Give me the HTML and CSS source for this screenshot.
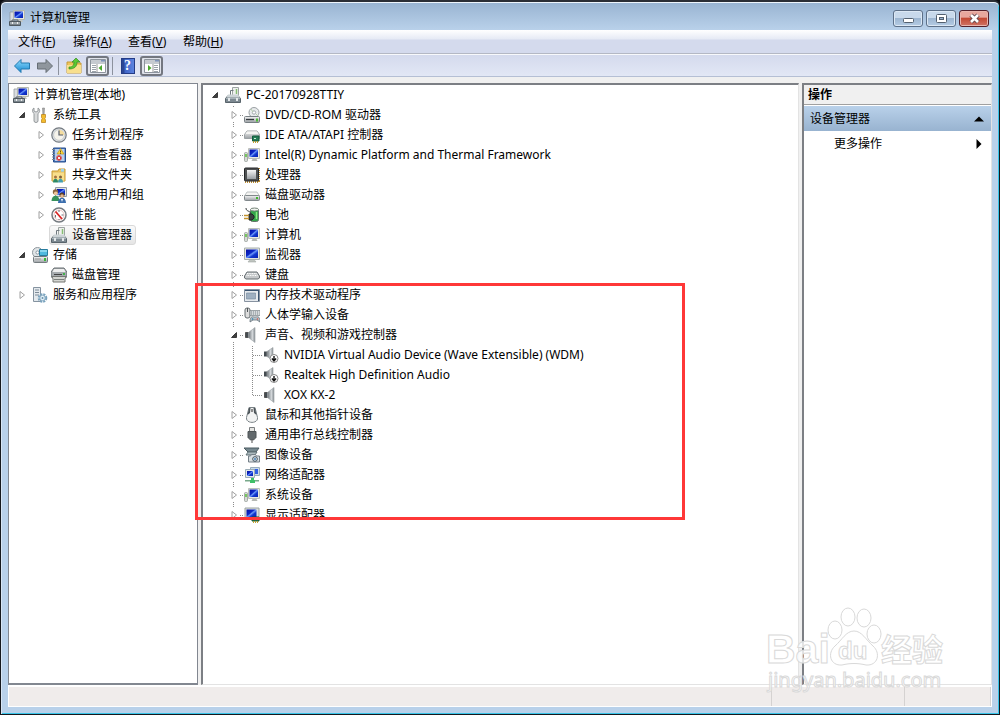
FILE: index.html
```html
<!DOCTYPE html>
<html lang="zh-CN">
<head>
<meta charset="utf-8">
<title>计算机管理</title>
<link rel="stylesheet" href="styles.css">
</head>
<body>
<svg class="defs" aria-hidden="true">
  <defs>
    <linearGradient id="screen" x1="0" y1="0" x2="1" y2="1"><stop offset="0" stop-color="#0510a0"/><stop offset=".4" stop-color="#0c28c8"/><stop offset=".5" stop-color="#6c98f8"/><stop offset=".65" stop-color="#1238d0"/><stop offset="1" stop-color="#0820b0"/></linearGradient>
    <linearGradient id="metal" x1="0" y1="0" x2="0" y2="1"><stop offset="0" stop-color="#f6f6f6"/><stop offset="1" stop-color="#9a9fa3"/></linearGradient>
    <linearGradient id="cone" x1="0" y1="0" x2="1" y2="0"><stop offset="0" stop-color="#6c7277"/><stop offset=".6" stop-color="#d5d9dc"/><stop offset="1" stop-color="#848b90"/></linearGradient>
    <linearGradient id="blue" x1="0" y1="0" x2="0" y2="1"><stop offset="0" stop-color="#8fdcff"/><stop offset="1" stop-color="#1687cf"/></linearGradient>
  </defs>
  <symbol id="mgmt" viewBox="0 0 16 16"><path d="M1 2h4v9H1z" fill="#d9dcdf" stroke="#8b9298" stroke-width=".7"/><path d="M4.500 .5h11v9h-11z" fill="#e6e8e2" stroke="#b5b9af"/><path d="M5.500 1.500h8.500V8H5.500z" fill="url(#screen)"/><path d="M8 10h5l1 2H8z" fill="#c5c8c4"/><path d="M3 10h6v2H3z" fill="none" stroke="#59636a"/><path d="M.5 11.500h11v4H.5z" fill="#78838a" stroke="#4e585f"/><path d="M1 13h10" stroke="#c6ced2"/><path d="M3 12h1v2H3zM8 12h1v2H8z" fill="#eee"/></symbol>
  <symbol id="tools" viewBox="0 0 16 16"><path d="M2 1v3l2 1 2-1V1c2 1 2.500 4 0 5.500V14c0 2-4 2-4 0V6.500C0 5 0 2 2 1z" fill="#d8dadb" stroke="#83888c" stroke-width=".8"/><path d="M10.500 1h2l-.4 7h-1.200z" fill="#aaa" stroke="#777" stroke-width=".5"/><path d="M9.500 7.500h4v3l-.7 1 .7 1.500v2.500h-4V13l.7-1.500-.7-1z" fill="#f3bc2e" stroke="#b77c12" stroke-width=".7"/></symbol>
  <symbol id="clock" viewBox="0 0 16 16"><circle cx="8" cy="8" r="7.200" fill="#dfe4e8" stroke="#73797f" stroke-width="1.200"/><circle cx="8" cy="8" r="5.400" fill="#f5f3eb" stroke="#b1b5b8" stroke-width=".6"/><path d="M8 2.700A5.300 5.300 0 0 1 13.300 8H8z" fill="#f4dda0"/><path d="M8 3.500V8h4" fill="none" stroke="#555d6b" stroke-width="1.200"/></symbol>
  <symbol id="event" viewBox="0 0 16 16"><path d="M2.500 1h12v14h-12z" fill="#4575ba" stroke="#284f8e"/><path d="M4 2h9.500v12H4z" fill="#b8d0ef"/><path d="M1 2.500h3M1 5h3M1 7.500h3M1 10h3M1 12.500h3" stroke="#7f8a98"/><path d="M9.500 1.500l3.500 5.500H6z" fill="#ffd93c" stroke="#ba8e11" stroke-width=".6"/><path d="M9.500 3.500v2M9.500 6v.8" stroke="#3d3416" stroke-width=".8"/><circle cx="8" cy="11" r="2.700" fill="#d83a3a"/><path d="M6.800 9.800l2.400 2.400M9.200 9.800l-2.400 2.400" stroke="#fff" stroke-width=".9"/></symbol>
  <symbol id="share" viewBox="0 0 16 16"><path d="M1 4h6l1-2h6v12H1z" fill="#f2cb62" stroke="#c79c35"/><path d="M10 2h3v4h-3z" fill="#9fd5ee"/><path d="M1.500 5h12v9h-12z" fill="#f8df8c" stroke="#d3aa49" stroke-width=".6"/><circle cx="4.500" cy="10" r="1.500" fill="#a67241"/><circle cx="9.500" cy="10" r="1.500" fill="#80603d"/><path d="M2 15.500c0-5 5-5 5 0z" fill="#2c8966"/><path d="M7 15.500c0-5 5-5 5 0z" fill="#429fb1"/></symbol>
  <symbol id="users" viewBox="0 0 16 16"><path d="M4.500.5h11v9h-11z" fill="#dfe4e7" stroke="#949da4"/><path d="M6 2h8v6H6z" fill="url(#screen)"/><circle cx="4.500" cy="5" r="2.700" fill="#8b6540"/><circle cx="4.800" cy="6.300" r="1.900" fill="#edc49c"/><path d="M.5 14c0-7 8-7 8 0z" fill="#37915b"/><circle cx="11" cy="8" r="2.500" fill="#604326"/><circle cx="11" cy="9" r="1.800" fill="#e5b98f"/><path d="M7 16c0-7 8-7 8 0z" fill="#3c6fae"/><path d="M10 12l1 3 1-3z" fill="#fff"/></symbol>
  <symbol id="perf" viewBox="0 0 16 16"><circle cx="8" cy="8" r="7" fill="#fff" stroke="#757b80" stroke-width="1.500"/><circle cx="8" cy="8" r="5" fill="#fff" stroke="#d8a09c" stroke-width=".6"/><path d="M4.500 4.500l6.500 7.500" stroke="#d82525" stroke-width="1.800"/><path d="M8 3v2M12.500 8h-2M8 12v1M4.500 10.500V8" stroke="#59636b" stroke-width=".9"/></symbol>
  <symbol id="devmgr" viewBox="0 0 16 16"><path d="M7.500.5h6v8h-6z" fill="#eef0ee" stroke="#9da4a2"/><path d="M5.500 8V3.500h3" fill="none" stroke="#70797e"/><path d="M11.500 2v5" stroke="#86bd73" stroke-width="1.500"/><path d="M3 8.500h10l2.500 3v4H.5v-4z" fill="#7d8991" stroke="#59646b"/><path d="M3 7.500h10l2 3H1.500z" fill="#ccd3d6"/><path d="M1 11.500h14" stroke="#a8b3b9"/><path d="M3 11h2v3H3zM11 11h2v3h-2z" fill="#e4e8ea"/></symbol>
  <symbol id="storage" viewBox="0 0 16 16"><circle cx="5.500" cy="5.500" r="5" fill="#e1e5e7" stroke="#8d969c"/><circle cx="5.500" cy="5.500" r="1.600" fill="#fff" stroke="#8998a2"/><path d="M7.500 2.500h8v6h-8z" fill="#50b9df" stroke="#287c9e"/><path d="M8 4h7" stroke="#c4f2ff"/><rect x="1.500" y="9.500" width="14" height="6" rx="1" fill="url(#metal)" stroke="#747c80"/><path d="M3 12h6" stroke="#999"/><path d="M12 11h2v3h-2z" fill="#38b83b"/></symbol>
  <symbol id="diskmgmt" viewBox="0 0 16 16"><path d="M3 1h10l3 4v5H0V5z" fill="#a5aaad" stroke="#686f73"/><path d="M3 2h10l1.500 3H1.500z" fill="#eee"/><path d="M3 7.500h8" stroke="#444"/><path d="M12 6h2v2h-2z" fill="#42b349"/><path d="M1 9.500h14l-1 2.500v3H2v-3z" fill="#d5d6d2" stroke="#747773"/><path d="M3 12.500h10" fill="none" stroke="#7b807c"/></symbol>
  <symbol id="services" viewBox="0 0 16 16"><path d="M1.500.5h7v14h-7z" fill="#e4e9ed" stroke="#8593a0"/><path d="M3 3h4M3 5.500h4M3 8h4" stroke="#7d8b98"/><circle cx="10.500" cy="11" r="3.500" fill="none" stroke="#79a2bd" stroke-width="2.600" stroke-dasharray="1.900 .9"/><circle cx="10.500" cy="11" r="2.700" fill="#e7f2f7" stroke="#8bb0c8"/><circle cx="10.500" cy="11" r="1" fill="#6892ad"/></symbol>
  <symbol id="dvd" viewBox="0 0 16 16"><circle cx="10" cy="5.500" r="5" fill="#e8ebec" stroke="#999fa2"/><circle cx="10" cy="5.500" r="1.700" fill="#fff" stroke="#a2a9ad"/><path d="M7 2l2 3M12 7l2 2" stroke="#b4cdaa"/><rect x=".5" y="9.500" width="15" height="6" rx="1" fill="url(#metal)" stroke="#777f83"/><path d="M2 12.500h8" stroke="#343a3d" stroke-width="1.300"/><path d="M12 11.500h2v3h-2z" fill="#4eba36"/></symbol>
  <symbol id="ide" viewBox="0 0 16 16"><path d="M3 4h10l2.500 3.500v4h-15v-4z" fill="url(#metal)" stroke="#9ca2a5"/><path d="M3 4.500h10l1.500 2.500h-13z" fill="#f5f5f3"/><path d="M8.500 9h6.500v5H8.500z" fill="#247b56" stroke="#105d3c"/><path d="M10 11h2v1h-2z" fill="#c7efd4"/><path d="M9.500 14v2M11.500 14v2M13.500 14v2" stroke="#bd9e34"/></symbol>
  <symbol id="pc" viewBox="0 0 16 16"><rect x=".5" y="5.500" width="3" height="9" rx="1" fill="#d6dad7" stroke="#969c98" stroke-width=".8"/><path d="M2 7v3" stroke="#4fc02e" stroke-width="1.400"/><path d="M4.500 1.500h11v10h-11z" fill="#e9eae5" stroke="#bcc0bb"/><path d="M5.500 2.500H14V10H5.500z" fill="url(#screen)"/><path d="M8.500 12h4l1 2h-6z" fill="#b5b8b4"/></symbol>
  <symbol id="cpu" viewBox="0 0 16 16"><path d="M1 15h14v-2M15 1v14" fill="none" stroke="#bd8e31" stroke-width="2" stroke-dasharray="1 1"/><rect x=".5" y="1" width="14" height="13" rx="1" fill="#4e5152" stroke="#242729"/><path d="M3 3h9v9H3z" fill="url(#metal)"/></symbol>
  <symbol id="disk" viewBox="0 0 16 16"><path d="M3 5h10l2.500 4H.5z" fill="#f4f4f2" stroke="#acb2b4" stroke-width=".8"/><rect x=".5" y="8.500" width="15" height="5" rx="1" fill="url(#metal)" stroke="#81888b"/><path d="M12 10h2v2h-2z" fill="#3eb72b"/></symbol>
  <symbol id="battery" viewBox="0 0 16 16"><rect x="6.500" y="1.500" width="8" height="13" rx="2" fill="#34a54a" stroke="#66756b"/><ellipse cx="10.500" cy="2.500" rx="4" ry="1.500" fill="#eff3ee" stroke="#7c897f"/><path d="M12.500 5v7" stroke="#8cec83" stroke-width="1.500"/><path d="M2 1c0 4 4 2 5 6" fill="none" stroke="#383d3d"/><path d="M5 7h3l2 2v2l-2 2H5z" fill="#3b4241" stroke="#202524"/><path d="M0 8.500h5M0 11.500h5" stroke="#c4932e" stroke-width="1.500"/></symbol>
  <symbol id="monitor" viewBox="0 0 16 16"><path d="M.5 1h15v11.500H.5z" fill="#e2e4df" stroke="#a6aeac"/><path d="M2 2.500h12v8.500H2z" fill="url(#screen)"/><path d="M6 12.500h4l2 2.500H4z" fill="#bfc4bf" stroke="#a2a9a6" stroke-width=".6"/></symbol>
  <symbol id="keyboard" viewBox="0 0 16 16"><path d="M3 5h10l2.500 4v2l-1.500 1H2l-1.500-1V9z" fill="#c5c8ca" stroke="#676e72"/><path d="M3 6.500h10M2.500 8.500h11" stroke="#fff" stroke-dasharray="1 .7"/></symbol>
  <symbol id="memory" viewBox="0 0 16 16"><path d="M.5 2.500h15v12H.5z" fill="#e6eaee" stroke="#8792a0"/><path d="M2.500 6h9v6h-9z" fill="#9fb0c1" stroke="#74869a" stroke-width=".6"/><path d="M1 3.500h14M14.500 4v10" stroke="#3b5470"/></symbol>
  <symbol id="hid" viewBox="0 0 16 16"><rect x="1" y="1" width="5" height="10" rx="2" fill="#ddd" stroke="#656c70"/><path d="M3.500 1v4" stroke="#505659"/><path d="M6 3.500h10v5H6z" fill="#d6dadc" stroke="#7b8488" stroke-width=".7"/><path d="M7 5h8M7 7h8" stroke="#7c878c" stroke-dasharray="1 1"/><path d="M6 15c0-7 3-5 5-5s5-2 5 5l-3-2H9z" fill="#b8c3ca" stroke="#64717a" stroke-width=".8"/><circle cx="8.500" cy="12" r=".8" fill="#227ca9"/><circle cx="13.500" cy="12" r=".8" fill="#d35146"/></symbol>
  <symbol id="speaker" viewBox="0 0 16 16"><path d="M1.500 5.500h3v5h-3z" fill="#454c51" stroke="#555"/><path d="M4.500 5.500L11 .5v15l-6.500-5z" fill="url(#cone)" stroke="#a0a6aa" stroke-width=".7"/></symbol>
  <symbol id="speaker-off" viewBox="0 0 16 16"><path d="M1 4.500h3v5H1z" fill="#454c51"/><path d="M4 4.500L10 .5v13L4 9.500z" fill="url(#cone)" stroke="#a0a6aa" stroke-width=".7"/><circle cx="11" cy="11.500" r="4" fill="#fff" stroke="#888"/><path d="M11 9v4M8.900 11.500L11 14l2.100-2.500" fill="none" stroke="#111" stroke-width="1.400"/></symbol>
  <symbol id="mouse" viewBox="0 0 16 16"><path d="M5 .5h6l2.500 10c1 6.500-12 6.500-11 0z" fill="#f2f3f3" stroke="#7b8387"/><path d="M5 1h1.500L6 6 3.500 8zM9.500 1H11l1.500 7L10 6z" fill="#4c5459"/><path d="M8 2v3" stroke="#555" stroke-width="1.300"/></symbol>
  <symbol id="usb" viewBox="0 0 16 16"><path d="M5.500.5h5v5h-5z" fill="#e5e5e2" stroke="#797d7f"/><path d="M4 4.500h8v6L9.500 13h-3L4 10.500z" fill="#62696c" stroke="#4e5456"/><path d="M8 13v3" stroke="#888" stroke-width="1.500"/></symbol>
  <symbol id="camera" viewBox="0 0 16 16"><path d="M0 1h15l-3 4H4z" fill="#778990" stroke="#4b5b61"/><path d="M4 5h9l-2 3H2z" fill="#acbabe" stroke="#607176"/><path d="M4.500 9h2l1-1.500h4l1 1.500h3v6h-11z" fill="#d9dfe2" stroke="#747f87"/><circle cx="11" cy="12" r="2.300" fill="#eff8ff" stroke="#3a4b58"/><circle cx="11" cy="12" r="1" fill="#407aad"/></symbol>
  <symbol id="net" viewBox="0 0 16 16"><path d="M6.500.5h9v8h-9z" fill="#cbdbea" stroke="#99acb9"/><path d="M8 2h6v5H8z" fill="#315fe2"/><path d="M1.500 2.500h9v8h-9z" fill="#e2e8e9" stroke="#9cadb7"/><path d="M3 4h6v5H3z" fill="url(#screen)"/><path d="M1 13h14v1.500H1z" fill="#78a98a"/><path d="M7 11h3v2h1v3H6v-3h1z" fill="#3fc069"/></symbol>
  <symbol id="display" viewBox="0 0 16 16"><path d="M1 1h14v11H1z" fill="#dce0dc" stroke="#9aa2a2"/><path d="M2.500 2.500h10v8h-10z" fill="url(#screen)"/><path d="M8 10h7v4H8z" fill="#267950" stroke="#155437"/><path d="M9.500 14v2M11.500 14v2M13.500 14v2" stroke="#c3a231"/></symbol>
  <symbol id="open" viewBox="0 0 8 8"><path d="M6.500 1.500v5h-5z" fill="#404040" stroke="#222" stroke-width=".8"/></symbol>
  <symbol id="closed" viewBox="0 0 8 8"><path d="M2 .5v7L6.500 4z" fill="#fff" stroke="#a0a0a0"/></symbol>
  <symbol id="arrow" viewBox="0 0 16 16"><path d="M.5 8L7 1.500V5h8.500v6H7v3.500z"/></symbol>
  <symbol id="up" viewBox="0 0 16 16"><path d="M1 4h5l1 1h8v10H1z" fill="#efc65b" stroke="#c79b39"/><path d="M1 7h14v8H1z" fill="#f8df8d"/><path d="M3 9c4 0 5-2 5-5H6l4-4 4 4h-3c0 5-3 7-8 7z" fill="#5bc833" stroke="#368b21" stroke-width=".7"/></symbol>
  <symbol id="panel-l" viewBox="0 0 16 16"><path d="M.5 1.500h15v13H.5z" fill="#fff" stroke="#8d949d"/><path d="M1 3h14M1 5h14" stroke="#8c95a1"/><path d="M12 2v1.500M14 2v1.500" stroke="#345ba2"/><path d="M2 7.500h4M2 9.500h4M2 11.500h4M2 13.500h4" stroke="#9aa1a9"/><path d="M7 6v8" stroke="#999"/><path d="M12 7v6l-3.500-3z" fill="#4aa72d"/></symbol>
  <symbol id="panel-r" viewBox="0 0 16 16"><path d="M.5 1.500h15v13H.5z" fill="#fff" stroke="#8d949d"/><path d="M1 3h14M1 5h14" stroke="#8c95a1"/><path d="M12 2v1.500M14 2v1.500" stroke="#345ba2"/><path d="M10 7.500h4M10 9.500h4M10 11.500h4M10 13.500h4" stroke="#9aa1a9"/><path d="M9 6v8" stroke="#999"/><path d="M4 7v6l3.500-3z" fill="#4aa72d"/></symbol>
</svg>

<div class="window">
  <header class="titlebar">
    <svg class="icon"><use href="#mgmt"/></svg>
    <h1 class="title">计算机管理</h1>
    <div class="controls">
      <button class="control" aria-label="最小化"><svg viewBox="0 0 28 15"><rect x="9.500" y="7.500" width="10" height="4" rx="1" fill="#fff" stroke="#53606f"/></svg></button>
      <button class="control" aria-label="最大化"><svg viewBox="0 0 28 15"><rect x="9.500" y="3.500" width="10" height="8" rx="1" fill="#fff" stroke="#53606f"/><rect x="12.500" y="6.500" width="4" height="2" fill="#9ab2cd" stroke="#53606f"/></svg></button>
      <button class="control control-close" aria-label="关闭"><svg viewBox="0 0 28 15"><path d="M11 4l7 7M18 4l-7 7" stroke="#62474d" stroke-width="4.500"/><path d="M11 4l7 7M18 4l-7 7" stroke="#fff" stroke-width="2.600"/></svg></button>
    </div>
  </header>

  <div class="client">
    <nav class="menubar">
      <button class="menu">文件(<u>F</u>)</button>
      <button class="menu">操作(<u>A</u>)</button>
      <button class="menu">查看(<u>V</u>)</button>
      <button class="menu">帮助(<u>H</u>)</button>
    </nav>
    <div class="toolbar">
      <div class="tool-group">
        <button class="tool tool-back" aria-label="后退"><svg class="icon"><use href="#arrow"/></svg></button>
        <button class="tool tool-forward" aria-label="前进"><svg class="icon"><use href="#arrow"/></svg></button>
      </div>
      <div class="tool-group">
        <button class="tool" aria-label="向上"><svg class="icon"><use href="#up"/></svg></button>
        <button class="tool tool-on" aria-label="显示/隐藏控制台树"><svg class="icon"><use href="#panel-l"/></svg></button>
      </div>
      <div class="tool-group">
        <button class="tool" aria-label="帮助"><span class="help">?</span></button>
        <button class="tool tool-on" aria-label="显示/隐藏操作窗格"><svg class="icon"><use href="#panel-r"/></svg></button>
      </div>
    </div>

    <main class="panes">
      <section class="pane console">
        <ul class="tree">
          <li><div class="row root"><svg class="icon"><use href="#mgmt"/></svg><span class="label">计算机管理(本地)</span></div>
            <ul class="branch">
              <li><div class="row"><button class="twisty" aria-label="折叠"><svg><use href="#open"/></svg></button><svg class="icon"><use href="#tools"/></svg><span class="label">系统工具</span></div>
                <ul class="branch inner">
                  <li><div class="row"><button class="twisty" aria-label="展开"><svg><use href="#closed"/></svg></button><svg class="icon"><use href="#clock"/></svg><span class="label">任务计划程序</span></div></li>
                  <li><div class="row"><button class="twisty" aria-label="展开"><svg><use href="#closed"/></svg></button><svg class="icon"><use href="#event"/></svg><span class="label">事件查看器</span></div></li>
                  <li><div class="row"><button class="twisty" aria-label="展开"><svg><use href="#closed"/></svg></button><svg class="icon"><use href="#share"/></svg><span class="label">共享文件夹</span></div></li>
                  <li><div class="row"><button class="twisty" aria-label="展开"><svg><use href="#closed"/></svg></button><svg class="icon"><use href="#users"/></svg><span class="label">本地用户和组</span></div></li>
                  <li><div class="row"><button class="twisty" aria-label="展开"><svg><use href="#closed"/></svg></button><svg class="icon"><use href="#perf"/></svg><span class="label">性能</span></div></li>
                  <li><div class="row"><span class="twisty"></span><span class="selected"><svg class="icon"><use href="#devmgr"/></svg><span class="label">设备管理器</span></span></div></li>
                </ul>
              </li>
              <li><div class="row"><button class="twisty" aria-label="折叠"><svg><use href="#open"/></svg></button><svg class="icon"><use href="#storage"/></svg><span class="label">存储</span></div>
                <ul class="branch inner">
                  <li><div class="row"><span class="twisty"></span><svg class="icon"><use href="#diskmgmt"/></svg><span class="label">磁盘管理</span></div></li>
                </ul>
              </li>
              <li><div class="row"><button class="twisty" aria-label="展开"><svg><use href="#closed"/></svg></button><svg class="icon"><use href="#services"/></svg><span class="label">服务和应用程序</span></div></li>
            </ul>
          </li>
        </ul>
      </section>

      <section class="pane devices">
        <ul class="tree">
          <li><div class="row"><button class="twisty" aria-label="折叠"><svg><use href="#open"/></svg></button><svg class="icon"><use href="#devmgr"/></svg><span class="label">PC-20170928TTIY</span></div>
            <ul class="branch inner lines">
              <li><div class="row"><button class="twisty" aria-label="展开"><svg><use href="#closed"/></svg></button><svg class="icon"><use href="#dvd"/></svg><span class="label">DVD/CD-ROM 驱动器</span></div></li>
              <li><div class="row"><button class="twisty" aria-label="展开"><svg><use href="#closed"/></svg></button><svg class="icon"><use href="#ide"/></svg><span class="label">IDE ATA/ATAPI 控制器</span></div></li>
              <li><div class="row"><button class="twisty" aria-label="展开"><svg><use href="#closed"/></svg></button><svg class="icon"><use href="#pc"/></svg><span class="label">Intel(R) Dynamic Platform and Thermal Framework</span></div></li>
              <li><div class="row"><button class="twisty" aria-label="展开"><svg><use href="#closed"/></svg></button><svg class="icon"><use href="#cpu"/></svg><span class="label">处理器</span></div></li>
              <li><div class="row"><button class="twisty" aria-label="展开"><svg><use href="#closed"/></svg></button><svg class="icon"><use href="#disk"/></svg><span class="label">磁盘驱动器</span></div></li>
              <li><div class="row"><button class="twisty" aria-label="展开"><svg><use href="#closed"/></svg></button><svg class="icon"><use href="#battery"/></svg><span class="label">电池</span></div></li>
              <li><div class="row"><button class="twisty" aria-label="展开"><svg><use href="#closed"/></svg></button><svg class="icon"><use href="#pc"/></svg><span class="label">计算机</span></div></li>
              <li><div class="row"><button class="twisty" aria-label="展开"><svg><use href="#closed"/></svg></button><svg class="icon"><use href="#monitor"/></svg><span class="label">监视器</span></div></li>
              <li><div class="row"><button class="twisty" aria-label="展开"><svg><use href="#closed"/></svg></button><svg class="icon"><use href="#keyboard"/></svg><span class="label">键盘</span></div></li>
              <li><div class="row"><button class="twisty" aria-label="展开"><svg><use href="#closed"/></svg></button><svg class="icon"><use href="#memory"/></svg><span class="label">内存技术驱动程序</span></div></li>
              <li><div class="row"><button class="twisty" aria-label="展开"><svg><use href="#closed"/></svg></button><svg class="icon"><use href="#hid"/></svg><span class="label">人体学输入设备</span></div></li>
              <li><div class="row"><button class="twisty" aria-label="折叠"><svg><use href="#open"/></svg></button><svg class="icon"><use href="#speaker"/></svg><span class="label">声音、视频和游戏控制器</span></div>
                <ul class="branch inner leaves">
                  <li><div class="row"><svg class="icon"><use href="#speaker-off"/></svg><span class="label">NVIDIA Virtual Audio Device (Wave Extensible) (WDM)</span></div></li>
                  <li><div class="row"><svg class="icon"><use href="#speaker-off"/></svg><span class="label">Realtek High Definition Audio</span></div></li>
                  <li><div class="row"><svg class="icon"><use href="#speaker"/></svg><span class="label">XOX KX-2</span></div></li>
                </ul>
              </li>
              <li><div class="row"><button class="twisty" aria-label="展开"><svg><use href="#closed"/></svg></button><svg class="icon"><use href="#mouse"/></svg><span class="label">鼠标和其他指针设备</span></div></li>
              <li><div class="row"><button class="twisty" aria-label="展开"><svg><use href="#closed"/></svg></button><svg class="icon"><use href="#usb"/></svg><span class="label">通用串行总线控制器</span></div></li>
              <li><div class="row"><button class="twisty" aria-label="展开"><svg><use href="#closed"/></svg></button><svg class="icon"><use href="#camera"/></svg><span class="label">图像设备</span></div></li>
              <li><div class="row"><button class="twisty" aria-label="展开"><svg><use href="#closed"/></svg></button><svg class="icon"><use href="#net"/></svg><span class="label">网络适配器</span></div></li>
              <li><div class="row"><button class="twisty" aria-label="展开"><svg><use href="#closed"/></svg></button><svg class="icon"><use href="#pc"/></svg><span class="label">系统设备</span></div></li>
              <li><div class="row"><button class="twisty" aria-label="展开"><svg><use href="#closed"/></svg></button><svg class="icon"><use href="#display"/></svg><span class="label">显示适配器</span></div></li>
            </ul>
          </li>
        </ul>
        <div class="highlight"></div>
      </section>

      <aside class="pane actions">
        <h2 class="actions-title">操作</h2>
        <button class="actions-group"><span>设备管理器</span><svg class="caret" viewBox="0 0 10 10"><path d="M0 7.500L5 2.500l5 5z"/></svg></button>
        <button class="actions-item"><span>更多操作</span><svg class="caret" viewBox="0 0 10 10"><path d="M2.500 0v10l5-5z"/></svg></button>
      </aside>
    </main>

    <footer class="status"><span class="status-main"></span><span class="status-mid"></span><span class="status-end"></span></footer>
  </div>

  <svg class="watermark" viewBox="0 0 190 90" role="img" aria-label="Baidu 经验">
    <g class="mark">
      <ellipse cx="78" cy="32" rx="7" ry="9"/>
      <ellipse cx="91" cy="19" rx="7" ry="9"/>
      <ellipse cx="107" cy="20" rx="7" ry="9"/>
      <ellipse cx="117" cy="36" rx="7" ry="9"/>
      <path d="M97 33c8 0 12 9 19 15 8 7 5 20-7 19-8-2-16-2-24 0-12 1-15-12-7-19 7-6 11-15 19-15z"/>
      <text class="mark-latin" x="9" y="65">Bai</text>
      <text class="mark-du" x="81" y="61">du</text>
      <text class="mark-cjk" x="124" y="63">经验</text>
      <text class="mark-url" x="11" y="89">jingyan.baidu.com</text>
    </g>
  </svg>
</div>
</body>
</html>
```

FILE: styles.css
```css
* { box-sizing: border-box; }

body {
  margin: 0;
  background: #0b0d12;
  color: #000;
  font: 12px/20px "Noto Sans", "Noto Sans CJK SC", sans-serif;
}

button {
  margin: 0;
  padding: 0;
  border: 0;
  background: none;
  color: inherit;
  font: inherit;
}

ul { margin: 0; padding: 0; list-style: none; }
svg { display: block; flex: none; }
.defs { position: absolute; width: 0; height: 0; }
.icon { width: 16px; height: 16px; }

.window {
  position: relative;
  display: flex;
  flex-direction: column;
  height: 100vh;
  padding: 0 7px 7px;
  border: 1px solid #16181d;
  border-top: 2px solid #2b2e35;
  border-radius: 6px 6px 0 0;
  background: linear-gradient(#98b3d1 0, #b9d1ea 28px);
  box-shadow: inset 0 1px #eef5fc, inset 1px 0 #d8e6f5, inset -1px -1px #38c4e8;
}

.titlebar {
  display: flex;
  align-items: center;
  gap: 5px;
  height: 28px;
  padding: 4px 2px 0 1px;
}
.title { flex: 1; margin: 0; font-size: 12px; font-weight: 400; line-height: 20px; }
.controls { display: flex; gap: 3px; padding-right: 1px; }
.control {
  width: 30px;
  height: 17px;
  border: 1px solid #5d7088;
  border-radius: 3px;
  background: linear-gradient(#c8d9eb 45%, #9db6d1 50%, #b5cce4);
  box-shadow: inset 0 0 0 1px #dce8f4;
}
.control svg { width: 28px; height: 15px; }
.control-close {
  border-color: #54202a;
  background: linear-gradient(#e8a79d 40%, #c34a35 50%, #cf7466);
  box-shadow: inset 0 0 0 1px #e9b5ad;
}

.client {
  flex: 1;
  display: flex;
  flex-direction: column;
  min-height: 0;
  background: #f0f0f0;
}

.menubar {
  display: flex;
  height: 24px;
  padding: 1px 2px 0;
  border-bottom: 1px solid #b4b8c4;
  background: linear-gradient(#fff 0, #e6eaf5 9px, #d4daed 10px);
}
.menu { min-width: 55px; padding: 0 8px; text-align: left; }

.toolbar {
  display: flex;
  align-items: center;
  height: 23px;
  padding: 0 3px;
  border-top: 1px solid #f8f9fc;
  border-bottom: 1px solid #b5bfd4;
  background: linear-gradient(#d4daed, #e2e7f5);
}
.tool-group { display: flex; align-items: center; gap: 2px; height: 18px; padding-right: 3px; }
.tool-group + .tool-group { padding-left: 4px; border-left: 1px solid #8c929e; }
.tool { display: grid; place-items: center; width: 21px; height: 20px; }
.tool-back { fill: url(#blue); stroke: #237ab0; }
.tool-forward { fill: #8f969d; stroke: #666e75; }
.tool-forward .icon { transform: scaleX(-1); }
.tool-on {
  width: 23px;
  border: 2px solid #737780;
  border-radius: 3px;
  background: #e0e3eb;
}
.help {
  width: 14px;
  height: 16px;
  border: 1px solid #243c86;
  background: linear-gradient(90deg, #2b4795 2px, #3f65c7 3px, #5c83df);
  color: #fff;
  font: bold 14px/14px "Liberation Serif", serif;
}

.panes {
  flex: 1;
  display: grid;
  grid-template-columns: 190px minmax(0, 1fr) 190px;
  gap: 3px;
  min-height: 0;
  padding-top: 6px;
}
.pane {
  min-width: 0;
  border: 1px solid #e3e3e3;
  border-top: 2px solid #7c7f84;
  border-left: 2px solid #7c7f84;
  background: #fff;
}
.console { border: 1px solid #828790; border-bottom-width: 2px; padding: 1px 1px 0; }

.row {
  display: flex;
  align-items: center;
  height: 20px;
  padding-left: 6px;
  white-space: nowrap;
}
.root { padding-left: 3px; }
.twisty { display: grid; place-items: center; width: 12px; height: 14px; margin-right: 4px; flex: none; }
.twisty svg { width: 8px; height: 8px; }
.label { margin-left: 5px; }
.inner { padding-left: 19px; }
.selected {
  display: flex;
  align-items: center;
  height: 20px;
  margin-left: -2px;
  padding: 0 3px 0 1px;
  border: 1px solid #d9d9d9;
  border-radius: 3px;
  background: linear-gradient(#fafafa, #e5e5e5);
}

.devices { position: relative; }
.lines {
  background: repeating-linear-gradient(#fff 0 1px, #8b8b8b 1px 2px) 30px 0 / 1px calc(100% - 10px) no-repeat;
}
.lines .twisty { background: #fff; }
.lines .row { background: repeating-linear-gradient(90deg, #8b8b8b 0 1px, #fff 1px 2px) 18px 10px / 4px 1px no-repeat; }
.leaves {
  background: repeating-linear-gradient(#fff 0 1px, #8b8b8b 1px 2px) 30px 0 / 1px calc(100% - 9px) no-repeat;
}
.leaves .row { padding-left: 22px; background-position: 12px 10px; background-size: 10px 1px; }

.highlight {
  position: absolute;
  top: 198px;
  left: -8px;
  width: 490px;
  height: 237px;
  border: 3px solid #ff3838;
}

.actions-title {
  height: 20px;
  margin: 0;
  padding-left: 4px;
  border-bottom: 1px solid #a0a0a0;
  background: #f0f0f0;
  font-size: 12px;
  line-height: 20px;
}
.actions-group, .actions-item {
  display: flex;
  align-items: center;
  justify-content: space-between;
  width: 100%;
  height: 25px;
  padding: 0 7px 0 6px;
}
.actions-group { margin-top: 1px; background: linear-gradient(#b9d1ea, #98b3d0); }
.actions-item { padding-left: 30px; }
.caret { width: 10px; height: 10px; }

.status {
  display: grid;
  grid-template-columns: minmax(0, 1fr) 133px 86px;
  height: 22px;
  border: 1px solid #fff;
  border-top: 2px solid #fff;
  background: #f0eceb;
}
.status span { border-right: 1px solid #d5d2d1; }

.watermark {
  position: absolute;
  right: 52px;
  bottom: 26px;
  width: 190px;
  height: 90px;
  overflow: visible;
  pointer-events: none;
}
.mark { fill: #fff; fill-opacity: .8; stroke: #d9d9d9; stroke-width: 1px; font-weight: 700; }
.mark-latin { font-family: "Liberation Sans", sans-serif; font-size: 41px; }
.mark-du { font-family: "Liberation Sans", sans-serif; font-size: 24px; }
.mark-cjk { font-family: "Noto Sans CJK SC", sans-serif; font-size: 31px; }
.mark-url { font-family: "Noto Sans", sans-serif; font-size: 20px; font-weight: 400; }
```
